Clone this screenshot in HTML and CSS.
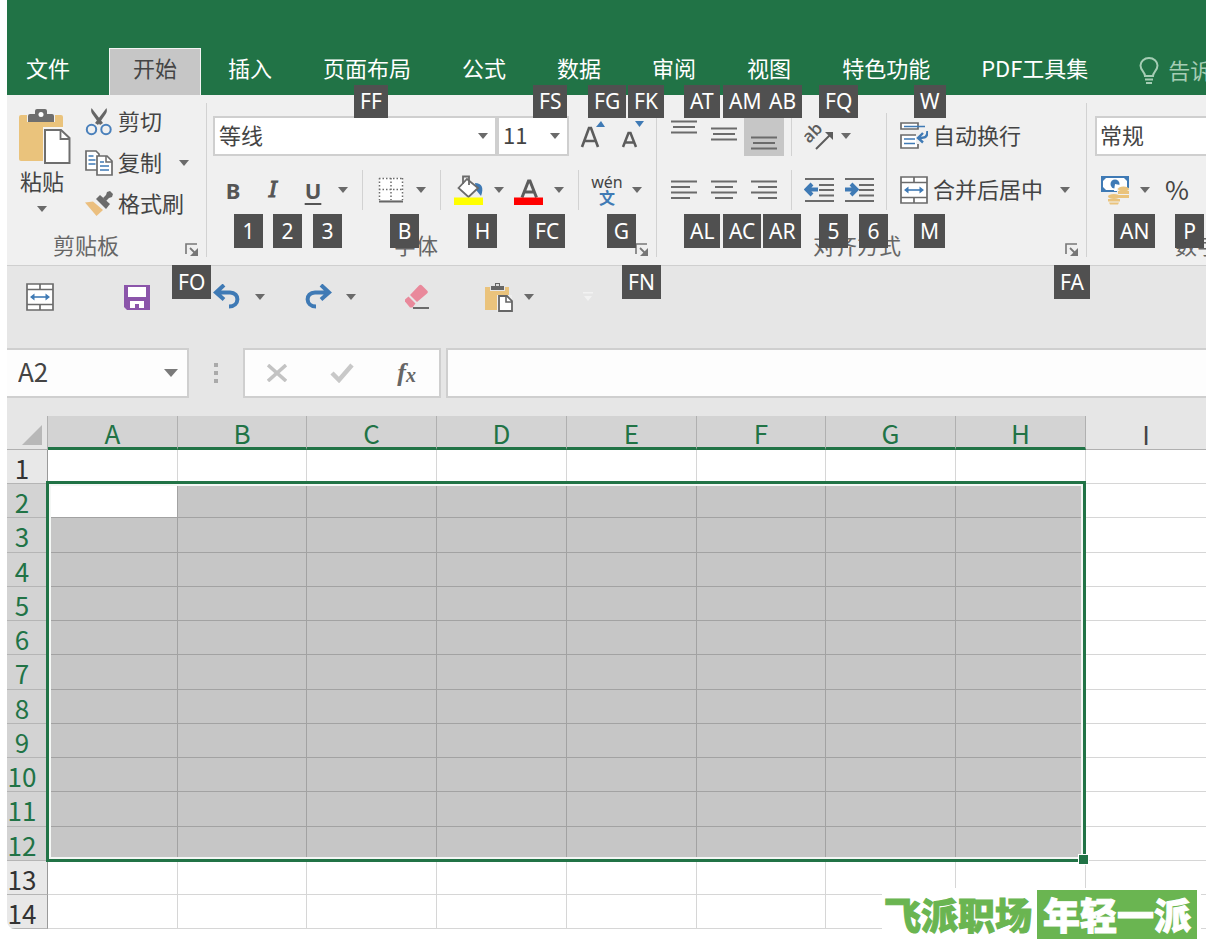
FILE: index.html
```html
<!DOCTYPE html>
<html lang="zh-CN">
<head>
<meta charset="utf-8">
<meta name="viewport" content="width=device-width, initial-scale=1">
<title>工作表</title>
<link rel="stylesheet" href="styles.css">
</head>
<body>
<svg class="symbols" aria-hidden="true">
  <symbol id="caret" viewBox="0 0 10 6"><path d="M0 0h10L5 6z" fill="#6a6a6a"/></symbol>
  <symbol id="launcher" viewBox="0 0 14 14"><path d="M1 11V1h11" fill="none" stroke="#777" stroke-width="1.6"/><path d="M5 5l5 5" stroke="#777" stroke-width="1.8"/><path d="M13 5v8H5z" fill="#777"/></symbol>
  <symbol id="merge" viewBox="0 0 28 28"><path d="M1 1h26v26H1z" fill="#fff" stroke="#6b6b6b" stroke-width="1.7"/><path d="M1 6.500h26M1 21.500h26M14 1v5.500M14 21.500V27" stroke="#6b6b6b" stroke-width="1.7"/><path d="M6 14h16" stroke="#3f7ab5" stroke-width="1.6"/><path d="M8.500 10.500v7L4 14zM19.500 10.500v7L24 14z" fill="#3f7ab5"/></symbol>
  <symbol id="clip" viewBox="0 0 54 56"><path d="M3 6h40a2 2 0 0 1 2 2v42a2 2 0 0 1-2 2H3a2 2 0 0 1-2-2V8a2 2 0 0 1 2-2z" fill="#eac37c"/><path d="M9 4.500h28V13H9z" fill="#f0f0f0"/><path d="M10 13V7a2 2 0 0 1 2-2h5V2a2 2 0 0 1 2-2h8a2 2 0 0 1 2 2v3h5a2 2 0 0 1 2 2v6z" fill="#6e6e6e"/><circle cx="23" cy="5.500" r="2.500" fill="#fff"/><path d="M25 18h20l8 8v29H25z" fill="#f4f4f4"/><path d="M27 21h16l8.500 8v25H27z" fill="#fff" stroke="#6e6e6e" stroke-width="2"/><path d="M42.500 21v9h9" fill="none" stroke="#6e6e6e" stroke-width="1.8"/></symbol>
</svg>

<main class="app">
  <nav class="tabs" aria-label="功能区">
    <a class="tab tab-file" href="#file">文件</a>
    <a class="tab tab-active" href="#home" aria-current="page">开始</a>
    <a class="tab" href="#insert">插入</a>
    <a class="tab" href="#layout">页面布局</a>
    <a class="tab" href="#formulas">公式</a>
    <a class="tab" href="#data">数据</a>
    <a class="tab" href="#review">审阅</a>
    <a class="tab" href="#view">视图</a>
    <a class="tab" href="#special">特色功能</a>
    <a class="tab" href="#pdf">PDF工具集</a>
    <a class="tab tab-tell" href="#tell"><svg width="20" height="28" viewBox="0 0 20 28" fill="none" stroke="#a5cdb4" stroke-width="2"><path d="M6 19c0-4-4.500-5.500-4.500-10.500a8.500 7.500 0 0 1 17 0C18.500 13.500 14 15 14 19z"/><path d="M6 22.500h8M7 26h6"/></svg>告诉</a>
  </nav>

  <section class="ribbon" aria-label="开始">
    <div class="group group-clipboard">
      <div class="clipboard">
        <button class="paste" type="button"><svg width="54" height="56"><use href="#clip"/></svg><span>粘贴</span><svg width="10" height="6"><use href="#caret"/></svg></button>
        <div class="stack">
          <button class="small" type="button"><svg width="28" height="28" viewBox="0 0 28 28"><path d="M6.500 0c-1 3 0 5 1.500 7l7 10 3-2z" fill="#666"/><path d="M21.500 0c1 3 0 5-1.500 7l-7 10-3-2z" fill="#666"/><circle cx="6.500" cy="21.500" r="4.700" fill="none" stroke="#4a80bb" stroke-width="2"/><circle cx="21" cy="21.500" r="4.700" fill="none" stroke="#4a80bb" stroke-width="2"/></svg><span>剪切</span></button>
          <button class="small" type="button"><svg width="28" height="28" viewBox="0 0 28 28"><path d="M1 2h10l3 3v16H1z" fill="#fff" stroke="#6b6b6b" stroke-width="1.700"/><path d="M3.500 7h5M3.500 11h7M3.500 15h7" stroke="#3f7ab5" stroke-width="1.600"/><path d="M12 7h10l5 5v14H12z" fill="#fff" stroke="#6b6b6b" stroke-width="1.700"/><path d="M21 7v6h6" fill="none" stroke="#6b6b6b" stroke-width="1.500"/><path d="M15 13h4M15 17h9M15 21h9" stroke="#3f7ab5" stroke-width="1.600"/></svg><span>复制</span><svg class="after" width="10" height="6"><use href="#caret"/></svg></button>
          <button class="small" type="button"><svg width="28" height="28" viewBox="0 0 28 28"><path d="M0 12.500l8-1 10 8.500-6.500 6z" fill="#ebbf7f"/><path d="M11 9l4-4 10 9-4 5z" fill="#6b6b6b"/><path d="M18 8l3-3 1-3 3-1 3 3-1 3-3 1-3 3z" fill="#6b6b6b"/></svg><span>格式刷</span></button>
        </div>
      </div>
      <div class="foot"><span>剪贴板</span><button class="launch" type="button" aria-label="剪贴板设置"><svg width="14" height="14"><use href="#launcher"/></svg></button></div>
    </div>

    <div class="group group-font">
      <div class="rows">
        <div class="row">
          <div class="combo combo-font"><select aria-label="字体"><option>等线</option></select><svg width="10" height="6"><use href="#caret"/></svg></div>
          <div class="combo combo-size"><select aria-label="字号"><option>11</option></select><svg width="10" height="6"><use href="#caret"/></svg></div>
          <button class="tool first-tool" type="button" aria-label="增大字号"><svg width="28" height="30" viewBox="0 0 28 30"><path d="M4 26L11 7h2l7 19M6.500 20h11" fill="none" stroke="#5c5c5c" stroke-width="2.600"/><path d="M18 6l5-6 4 6z" fill="#3f7ab5"/></svg></button>
          <button class="tool" type="button" aria-label="减小字号"><svg width="28" height="30" viewBox="0 0 28 30"><path d="M5 26l5.500-14h2L18 26M7 21.500h9" fill="none" stroke="#5c5c5c" stroke-width="2.500"/><path d="M17 0h9l-4.500 6z" fill="#3f7ab5"/></svg></button>
        </div>
        <div class="row">
          <button class="tool bold" type="button">B</button>
          <button class="tool italic" type="button">I</button>
          <button class="tool underline" type="button">U</button>
          <button class="drop" type="button" aria-label="下划线选项"><svg width="10" height="6"><use href="#caret"/></svg></button>
          <i class="sep"></i>
          <button class="tool" type="button" aria-label="边框"><svg width="26" height="26" viewBox="0 0 26 26"><path d="M1 1h24v22H1z" fill="#fff"/><path d="M1 1.500h24M1 12.500h24M1.500 1v22M13 1v22M24.500 1v22" stroke="#6b6b6b" stroke-width="1.500" stroke-dasharray="1.500 2"/><path d="M1 24.500h24" stroke="#666" stroke-width="2"/></svg></button>
          <button class="drop" type="button" aria-label="边框选项"><svg width="10" height="6"><use href="#caret"/></svg></button>
          <i class="sep"></i>
          <button class="tool" type="button" aria-label="填充颜色"><svg width="30" height="30" viewBox="0 0 30 30"><path d="M21 8c7 0 9 5 6 13l-5-6z" fill="#3f7ab5"/><path d="M4.500 13L13 4l11 9-9.500 9z" fill="#fff" stroke="#6b6b6b" stroke-width="1.800"/><path d="M9 9V1.500h6V10" fill="none" stroke="#6b6b6b" stroke-width="1.800"/><path d="M0 22.500h29V30H0z" fill="#ff0"/></svg></button>
          <button class="drop" type="button" aria-label="填充颜色选项"><svg width="10" height="6"><use href="#caret"/></svg></button>
          <button class="tool" type="button" aria-label="字体颜色"><svg width="30" height="30" viewBox="0 0 30 30"><path d="M8 22.500L14.500 6h1.500l6.500 16.500M10 17h11" fill="none" stroke="#5c5c5c" stroke-width="3"/><path d="M0 22.500h29V30H0z" fill="#f00"/></svg></button>
          <button class="drop" type="button" aria-label="字体颜色选项"><svg width="10" height="6"><use href="#caret"/></svg></button>
          <i class="sep"></i>
          <button class="tool pinyin" type="button"><span>wén</span><span class="han">文</span></button>
          <button class="drop" type="button" aria-label="拼音选项"><svg width="10" height="6"><use href="#caret"/></svg></button>
        </div>
      </div>
      <div class="foot"><span>字体</span><button class="launch" type="button" aria-label="字体设置"><svg width="14" height="14"><use href="#launcher"/></svg></button></div>
    </div>

    <div class="group group-align">
      <div class="columns">
        <div class="rows">
          <div class="row">
            <button class="tool top" type="button" aria-label="顶端对齐"><svg class="lines" width="26" height="14" viewBox="0 0 26 14"><path d="M0 1.500h26M2 7h22M0 12.500h26"/></svg></button>
            <button class="tool" type="button" aria-label="垂直居中"><svg class="lines" width="26" height="18" viewBox="0 0 26 18"><path d="M0 1.500h26M2 7h22M0 12.500h26"/></svg></button>
            <button class="tool pressed" type="button" aria-label="底端对齐" aria-pressed="true"><svg class="lines" width="26" height="14" viewBox="0 0 26 14"><path d="M0 1.500h26M2 7h22M0 12.500h26"/></svg></button>
            <i class="sep"></i>
            <button class="tool" type="button" aria-label="方向"><svg width="30" height="30" viewBox="0 0 30 30"><text class="angled" x="5" y="23" transform="rotate(-45 5 23)">ab</text><path d="M12 28L26 14" stroke="#5c5c5c" stroke-width="2"/><path d="M21 11h8v8z" fill="#5c5c5c"/></svg></button>
            <button class="drop drop-narrow" type="button" aria-label="方向选项"><svg width="10" height="6"><use href="#caret"/></svg></button>
          </div>
          <div class="row">
            <button class="tool" type="button" aria-label="左对齐"><svg class="lines" width="26" height="20" viewBox="0 0 26 20"><path d="M0 1.500h26M0 7h19M0 12.500h26M0 18h19"/></svg></button>
            <button class="tool" type="button" aria-label="居中"><svg class="lines" width="26" height="20" viewBox="0 0 26 20"><path d="M0 1.500h26M4 7h18M0 12.500h26M4 18h18"/></svg></button>
            <button class="tool" type="button" aria-label="右对齐"><svg class="lines" width="26" height="20" viewBox="0 0 26 20"><path d="M0 1.500h26M7 7h19M0 12.500h26M7 18h19"/></svg></button>
            <i class="sep"></i>
            <button class="tool" type="button" aria-label="减少缩进"><svg class="lines" width="30" height="26" viewBox="0 0 30 26"><path d="M1 2h29M15 8h15M15 13h15M15 18.500h15M1 24h29"/><path class="arrow" d="M14 12.500H4M8 7l-5.500 5.500L8 18"/></svg></button>
            <button class="tool" type="button" aria-label="增加缩进"><svg class="lines" width="30" height="26" viewBox="0 0 30 26"><path d="M1 2h29M15 8h15M15 13h15M15 18.500h15M1 24h29"/><path class="arrow" d="M1 12.500h10M7 7l5.500 5.500L7 18"/></svg></button>
          </div>
        </div>
        <div class="rows wide-rows">
          <button class="small row" type="button"><svg width="28" height="28" viewBox="0 0 28 28"><path d="M1 1h17v6H1zM1 13h17v13H1z" fill="#fff" stroke="#6b6b6b" stroke-width="1.700"/><path d="M4 4.500h21M4 17h11M4 21.500h11" stroke="#3f7ab5" stroke-width="1.700"/><path d="M16 10h6v12h-6z" fill="#f0f0f0"/><path d="M27.500 9c0 6-2 7-9 7M23 11l-5 5 5 4.500" fill="none" stroke="#3f7ab5" stroke-width="2.400"/></svg><span>自动换行</span></button>
          <button class="small row" type="button"><svg width="28" height="28"><use href="#merge"/></svg><span>合并后居中</span><svg class="after" width="10" height="6"><use href="#caret"/></svg></button>
        </div>
      </div>
      <div class="foot"><span>对齐方式</span><button class="launch" type="button" aria-label="对齐设置"><svg width="14" height="14"><use href="#launcher"/></svg></button></div>
    </div>

    <div class="group group-number">
      <div class="rows">
        <div class="row"><div class="combo combo-number"><select aria-label="数字格式"><option>常规</option></select></div></div>
        <div class="row">
          <button class="tool" type="button" aria-label="会计数字格式"><svg width="30" height="30" viewBox="0 0 30 30"><path d="M1 1h28v16H1z" fill="#3f7ab5"/><path d="M6 3h18l3 3v6l-3 3H6l-3-3V6z" fill="#fff"/><circle cx="15" cy="9" r="4.500" fill="#3f7ab5"/><path d="M15 9l5 1v6h-6z" fill="#fff"/><path d="M17 22v-9h13v9zM7 29v-9h14v9z" fill="#f0f0f0"/><g fill="#eac37c"><ellipse cx="23.500" cy="14" rx="5.500" ry="2.500"/><path d="M18 16h11v3H18zM19 20h10v3H19z"/><ellipse cx="14" cy="21.500" rx="6" ry="2.500"/><path d="M8 24h12v2.500H8zM9 27.500h10l-1 2h-8z"/></g></svg></button>
          <button class="drop" type="button" aria-label="会计格式选项"><svg width="10" height="6"><use href="#caret"/></svg></button>
          <button class="tool percent" type="button">%</button>
        </div>
      </div>
      <div class="foot"><span>数字</span></div>
    </div>
  </section>

  <div class="quick" role="toolbar" aria-label="快速访问工具栏">
    <button class="tool" type="button" aria-label="合并后居中"><svg width="28" height="28"><use href="#merge"/></svg></button>
    <button class="tool" type="button" aria-label="保存"><svg width="26" height="26" viewBox="0 0 26 26"><path d="M0 1h26v25H3l-3-3z" fill="#8b55aa"/><path d="M4 3h18v10H4zM6 17h14v7h-5v-4h-4v4H6z" fill="#fff"/></svg></button>
    <div class="pair"><button class="tool" type="button" aria-label="撤消"><svg class="turn" width="28" height="26" viewBox="0 0 28 26"><path d="M3 8.500h14c10 0 10 14-1 14M11 1L3 8.500l8 7"/></svg></button><button class="drop" type="button" aria-label="撤消选项"><svg width="10" height="6"><use href="#caret"/></svg></button></div>
    <div class="pair"><button class="tool" type="button" aria-label="恢复"><svg class="turn" width="28" height="26" viewBox="0 0 28 26"><path d="M25 8.500H11c-10 0-10 14 1 14M17 1l8 7.500-8 7"/></svg></button><button class="drop" type="button" aria-label="恢复选项"><svg width="10" height="6"><use href="#caret"/></svg></button></div>
    <button class="tool" type="button" aria-label="清除"><svg width="26" height="26" viewBox="0 0 26 26"><path d="M15 1.500a2 2 0 0 1 3 0l5 5a2 2 0 0 1 0 3L13 18 6 11z" fill="#e9899b"/><path d="M4.500 12.500l7 7-3 4H6l-5-6v-2z" fill="#e9899b"/><path d="M9 24h16" stroke="#6b6b6b" stroke-width="2"/></svg></button>
    <div class="pair pair-tight"><button class="tool" type="button" aria-label="粘贴"><svg width="30" height="30" viewBox="0 0 30 30"><path d="M1 5h24v23H1z" fill="#eac37c"/><path d="M6 3h15v6H6z" fill="#e6e6e6"/><path d="M7 8V4h4V1h5v3h4v4z" fill="#666"/><path d="M12 2h3v2h-3z" fill="#ddd"/><path d="M13 13h15v17H13z" fill="#eee"/><path d="M15 14h8l5 5v10H15z" fill="#fff" stroke="#666" stroke-width="1.800"/><path d="M22 14v6h6" fill="none" stroke="#666" stroke-width="1.600"/></svg></button><button class="drop" type="button" aria-label="粘贴选项"><svg width="10" height="6"><use href="#caret"/></svg></button></div>
    <button class="drop" type="button" aria-label="自定义快速访问工具栏"><svg width="10" height="10" viewBox="0 0 10 10"><path d="M0 0h10v1.500H0zM1 4h8L5 9z" fill="#f2f2f2"/></svg></button>
  </div>

  <div class="formula">
    <div class="name-box"><input type="text" value="A2" aria-label="名称框"><button class="drop" type="button" aria-label="名称列表"><svg width="14" height="8" viewBox="0 0 14 8"><path d="M0 0h14L7 8z" fill="#7a7a7a"/></svg></button></div>
    <svg class="grip" width="4" height="20" viewBox="0 0 4 20" fill="#aaa"><path d="M0 0h4v4H0zM0 8h4v4H0zM0 16h4v4H0z"/></svg>
    <div class="actions">
      <button type="button" aria-label="取消"><svg width="20" height="18" viewBox="0 0 20 18" stroke="#c3c3c3" stroke-width="3.5"><path d="M1 1l18 16M19 1L1 17"/></svg></button>
      <button type="button" aria-label="输入"><svg width="24" height="20" viewBox="0 0 24 20" fill="none" stroke="#c8c8c8" stroke-width="4.5"><path d="M2 10l7 7L22 2"/></svg></button>
      <button class="fx" type="button" aria-label="插入函数"><span>f</span><small>x</small></button>
    </div>
    <input class="formula-input" type="text" aria-label="编辑栏">
  </div>

  <div class="sheet">
    <table class="grid">
      <colgroup><col class="c-head"><col class="c-a"><col class="c-b"><col class="c-a"><col class="c-a"><col class="c-a"><col class="c-b"><col class="c-a"><col class="c-a"><col></colgroup>
      <thead>
        <tr><td class="corner"><svg width="20" height="20" viewBox="0 0 20 20"><path d="M20 0v20H0z" fill="#b8b8b8"/></svg></td><th scope="col" class="on">A</th><th scope="col" class="on">B</th><th scope="col" class="on">C</th><th scope="col" class="on">D</th><th scope="col" class="on">E</th><th scope="col" class="on">F</th><th scope="col" class="on">G</th><th scope="col" class="on">H</th><th scope="col">I</th></tr>
      </thead>
      <tbody>
        <tr><th scope="row">1</th><td></td><td></td><td></td><td></td><td></td><td></td><td></td><td></td><td></td></tr>
        <tr class="picked"><th scope="row">2</th><td class="active"></td><td></td><td></td><td></td><td></td><td></td><td></td><td></td><td></td></tr>
        <tr class="picked"><th scope="row">3</th><td></td><td></td><td></td><td></td><td></td><td></td><td></td><td></td><td></td></tr>
        <tr class="picked"><th scope="row">4</th><td></td><td></td><td></td><td></td><td></td><td></td><td></td><td></td><td></td></tr>
        <tr class="picked"><th scope="row">5</th><td></td><td></td><td></td><td></td><td></td><td></td><td></td><td></td><td></td></tr>
        <tr class="picked"><th scope="row">6</th><td></td><td></td><td></td><td></td><td></td><td></td><td></td><td></td><td></td></tr>
        <tr class="picked"><th scope="row">7</th><td></td><td></td><td></td><td></td><td></td><td></td><td></td><td></td><td></td></tr>
        <tr class="picked"><th scope="row">8</th><td></td><td></td><td></td><td></td><td></td><td></td><td></td><td></td><td></td></tr>
        <tr class="picked"><th scope="row">9</th><td></td><td></td><td></td><td></td><td></td><td></td><td></td><td></td><td></td></tr>
        <tr class="picked"><th scope="row">10</th><td></td><td></td><td></td><td></td><td></td><td></td><td></td><td></td><td></td></tr>
        <tr class="picked"><th scope="row">11</th><td></td><td></td><td></td><td></td><td></td><td></td><td></td><td></td><td></td></tr>
        <tr class="picked"><th scope="row">12</th><td></td><td></td><td></td><td></td><td></td><td></td><td></td><td></td><td></td></tr>
        <tr><th scope="row">13</th><td></td><td></td><td></td><td></td><td></td><td></td><td></td><td></td><td></td></tr>
        <tr><th scope="row">14</th><td></td><td></td><td></td><td></td><td></td><td></td><td></td><td></td><td></td></tr>
      </tbody>
    </table>
    <div class="selection"><i class="handle"></i></div>
  </div>

  <div class="keytips">
    <kbd class="k1 ff">FF</kbd><kbd class="k1 fs">FS</kbd><kbd class="k1 fg">FG</kbd><kbd class="k1 fk">FK</kbd><kbd class="k1 al">AT</kbd><kbd class="k1 ac">AM</kbd><kbd class="k1 ar">AB</kbd><kbd class="k1 fq">FQ</kbd><kbd class="k1 mm">W</kbd>
    <kbd class="k2 one">1</kbd><kbd class="k2 two">2</kbd><kbd class="k2 three">3</kbd><kbd class="k2 bb">B</kbd><kbd class="k2 hh">H</kbd><kbd class="k2 fc">FC</kbd><kbd class="k2 gg">G</kbd><kbd class="k2 al">AL</kbd><kbd class="k2 ac">AC</kbd><kbd class="k2 ar">AR</kbd><kbd class="k2 fq">5</kbd><kbd class="k2 six">6</kbd><kbd class="k2 mm">M</kbd><kbd class="k2 an">AN</kbd><kbd class="k2 pp">P</kbd>
    <kbd class="k3 fo">FO</kbd><kbd class="k3 fn">FN</kbd><kbd class="k3 fa">FA</kbd>
  </div>

  <div class="brand"><span>飞派职场</span><strong>年轻一派</strong></div>
</main>
</body>
</html>
```
FILE: styles.css
```css
* { box-sizing: border-box; }

body {
  margin: 0;
  background: #fff;
  color: #444;
  font: 22px/28px "Noto Sans CJK SC", sans-serif;
}

button, input, select {
  margin: 0;
  padding: 0;
  border: 0;
  border-radius: 0;
  background: none;
  color: inherit;
  font: inherit;
}

svg { display: block; flex: none; }
.symbols { position: absolute; width: 0; height: 0; }

.app {
  position: relative;
  margin: 0 3px 0 7px;
  padding-bottom: 22px;
}

/* Tabs */
.tabs {
  display: flex;
  align-items: flex-end;
  height: 95px;
  overflow: hidden;
  background: #217346;
}
.tab {
  flex: none;
  height: 47px;
  padding: 5px 25px 0 26px;
  color: #fff;
  text-decoration: none;
  white-space: nowrap;
}
.tab-file { padding: 5px 39px 0 19px; }
.tab-active {
  margin-right: 1px;
  padding: 4px 23px 0 23px;
  border: 1px solid #f4f4f4;
  border-bottom: 0;
  background: #c6c6c6;
  color: #444;
}
.tab-tell {
  display: flex;
  gap: 9px;
  padding-top: 7px;
  color: #a5cdb4;
}
.tab-tell svg { margin-top: 2px; }

/* Ribbon */
.ribbon {
  display: flex;
  height: 171px;
  padding: 8px 0;
  overflow: hidden;
  border-bottom: 1px solid #cfcfcf;
  background: #f0f0f0;
}
.group {
  display: flex;
  flex: none;
  flex-direction: column;
  justify-content: space-between;
  border-right: 1px solid #d2d2d2;
}
.group-clipboard { width: 200px; }
.group-font { width: 450px; padding-left: 6px; }
.group-align { width: 430px; padding-left: 7px; }
.group-number { flex: 1; min-width: 0; padding-left: 8px; border: 0; }

.foot {
  display: flex;
  align-items: flex-end;
  line-height: 24px;
  color: #666;
}
.foot span { flex: none; padding-bottom: 1px; }
.launch { margin-left: auto; }
.group-clipboard .foot { padding: 0 7px 0 46px; }
.group-font .foot { padding: 0 7px 0 181px; }
.group-align .foot { padding: 0 7px 0 149px; }
.group-number .foot { padding-left: 80px; }

.clipboard { display: flex; }
.paste {
  display: flex;
  flex-direction: column;
  align-items: center;
  width: 70px;
  padding-top: 6px;
}
.paste span { margin-bottom: 11px; line-height: 30px; }
.paste svg:first-child { margin-left: 6px; }
.stack { display: grid; gap: 3px; padding-left: 8px; }
.small {
  display: flex;
  align-items: center;
  gap: 5px;
  height: 38px;
  white-space: nowrap;
}
.small span { padding-bottom: 4px; }
.after { margin-left: 12px; }

.rows { display: grid; gap: 14px; padding-top: 13px; align-content: start; }
.row { display: flex; height: 40px; }
.columns { display: flex; }
.wide-rows {
  margin: 10px 0 0 7px;
  padding: 3px 0 0 13px;
  border-left: 1px solid #d2d2d2;
}

.combo {
  display: grid;
  align-items: center;
  height: 40px;
  border: 2px solid #cfcfcf;
  background: #fff;
}
.combo select, .combo svg { grid-area: 1 / 1; }
.combo select {
  appearance: none;
  width: 100%;
  height: 36px;
  padding: 0 0 4px 4px;
}
.combo svg { justify-self: end; margin-right: 7px; pointer-events: none; }
.combo-font { width: 284px; }
.combo-size { width: 72px; }
.combo-number { width: 170px; }
.combo-number select { padding-left: 3px; }

.tool {
  display: flex;
  flex: none;
  align-items: center;
  justify-content: center;
  width: 40px;
  height: 40px;
}
.first-tool { margin-left: 3px; }
.drop {
  display: flex;
  flex: none;
  align-items: center;
  justify-content: center;
  width: 20px;
  height: 40px;
}
.drop-narrow { width: 14px; }
.sep { width: 1px; margin: 0 8px 0 9px; background: #d2d2d2; }
.group-align .sep { margin: 0 7px; }

.bold, .italic, .underline {
  color: #555;
  font: bold 22px/26px "Noto Sans", sans-serif;
}
.italic { font-family: "DejaVu Serif", serif; font-style: italic; font-weight: 400; -webkit-text-stroke: 1px; }
.underline { text-decoration: underline; text-underline-offset: 4px; }
.pinyin {
  flex-direction: column;
  font: 16px/14px "Noto Sans", sans-serif;
}
.pinyin .han {
  color: #3f7ab5;
  font: bold 16px/17px "Noto Sans CJK SC", sans-serif;
}
.angled { fill: #5c5c5c; font: 600 17px "Open Sans", sans-serif; }
.percent { padding: 0 0 2px 4px; font-size: 26px; }
.lines { fill: none; stroke: #6b6b6b; stroke-width: 1.8; }
.lines .arrow { stroke: #3f7ab5; stroke-width: 4; }
.top { align-items: flex-start; padding-top: 4px; }
.pressed { align-items: flex-end; padding-bottom: 6px; background: #c6c6c6; }

/* Quick access bar */
.quick {
  display: grid;
  grid-template-columns: 97px 90px 91px 99px 82px 99px 1fr;
  align-items: center;
  height: 82px;
  padding: 0 0 20px 13px;
  background: #e6e6e6;
}
.pair { display: flex; gap: 3px; }
.pair-tight { gap: 0; }
.turn { fill: none; stroke: #3f7ab5; stroke-width: 4; }

/* Formula bar */
.formula {
  display: flex;
  align-items: center;
  height: 68px;
  padding-bottom: 18px;
  background: #e6e6e6;
}
.name-box, .actions, .formula-input {
  height: 50px;
  border: 2px solid #cfcfcf;
  background: #fdfdfd;
}
.name-box {
  display: flex;
  align-items: center;
  width: 182px;
  border-left: 0;
}
.name-box input {
  width: 154px;
  height: 46px;
  padding: 0 0 6px 11px;
  font-size: 26px;
}
.grip { margin: 0 25px; }
.actions { display: flex; align-items: center; width: 198px; }
.actions button { display: grid; place-items: center; width: 65px; height: 46px; }
.actions .fx {
  display: flex;
  align-items: center;
  justify-content: center;
  color: #666;
  font: italic bold 26px/30px "Liberation Serif", serif;
}
.fx small { padding-top: 4px; font-size: 20px; }
.formula-input { flex: 1; min-width: 0; margin-left: 5px; padding: 0 10px; border-right: 0; }

/* Worksheet */
.sheet {
  position: relative;
  overflow: hidden;
  border-bottom-left-radius: 8px;
}
.grid {
  width: 100%;
  table-layout: fixed;
  border-spacing: 0;
}
.c-head { width: 41px; }
.c-a { width: 130px; }
.c-b { width: 129px; }
.grid th, .grid td { padding: 0; border: 0 solid #d6d6d6; border-width: 0 1px 1px 0; }
.grid tr > :last-child { border-right: 0; }
.grid th { font-size: 26px; font-weight: 400; line-height: 28px; }
.grid tr { height: 34px; }
.grid tbody tr:nth-child(4n+3) { height: 35px; }
.grid thead th { padding-top: 2px; border-color: #b0b0b0; background: #e6e6e6; }
.grid thead .on { border-bottom: 3px solid #217346; background: #d3d3d3; color: #217346; }
.grid .corner {
  padding: 4px 5px 0 15px;
  border-color: #b0b0b0;
  background: #e6e6e6;
}
.grid tbody th {
  padding: 2px 10px 0 0;
  border-color: #b5b5b5;
  border-right-color: #999;
  background: #e8e8e8;
  color: #333;
}
.grid .picked th { background: #d3d3d3; color: #217346; }
.picked td:nth-child(-n+9) { border-color: #a2a2a2; background: #c6c6c6; }
.grid .picked .active { background: #fff; }

.selection {
  position: absolute;
  top: 65px;
  left: 39px;
  width: 1040px;
  height: 381px;
  border: 3px solid #217346;
  box-shadow: inset 0 0 0 2px #f4f7f5;
}
.handle {
  position: absolute;
  right: -6px;
  bottom: -6px;
  width: 11px;
  height: 11px;
  border: 1px solid #fff;
  background: #217346;
}

/* Key tips */
.keytips kbd {
  position: absolute;
  min-width: 29px;
  padding: 0 6px;
  background: #505050;
  color: #fff;
  font: 21px/34px "Noto Sans", sans-serif;
  text-align: center;
}
.keytips .k1 { top: 85px; line-height: 33px; }
.keytips .k2 { top: 214px; }
.keytips .k3 { top: 265px; }
.ff { left: 347px; }
.fs { left: 526px; }
.fg { left: 581px; }
.fk { left: 621px; }
.al { left: 677px; }
.ac { left: 716px; }
.ar { left: 756px; }
.fq { left: 812px; }
.mm { left: 907px; }
.one { left: 227px; }
.two { left: 266px; }
.three { left: 306px; }
.bb { left: 383px; }
.hh { left: 461px; }
.fc { left: 522px; }
.gg { left: 600px; }
.six { left: 852px; }
.an { left: 1107px; }
.pp { left: 1168px; }
.fo { left: 165px; }
.fn { left: 615px; }
.fa { left: 1047px; }

/* Brand mark */
.brand {
  position: absolute;
  right: 5px;
  bottom: 8px;
  display: flex;
  gap: 5px;
  padding: 2px 4px 4px 2px;
  background: #fff;
  color: #6ab551;
  font-size: 37px;
  font-weight: 900;
  line-height: 49px;
  white-space: nowrap;
  -webkit-text-stroke: 1px;
}
.brand strong {
  padding: 0 6px;
  background: #6ab551;
  color: #fff;
  font-weight: 900;
}
```
